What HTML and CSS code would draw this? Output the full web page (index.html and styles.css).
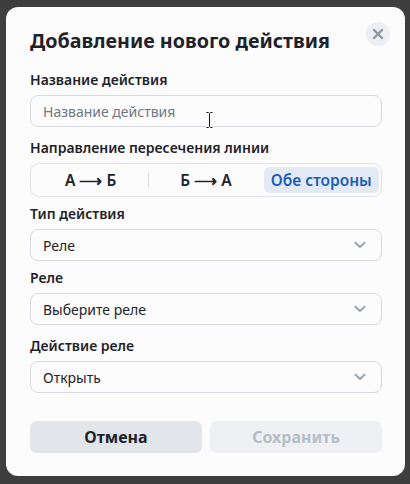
FILE: index.html
```html
<!DOCTYPE html>
<html lang="ru">
<head>
<meta charset="utf-8">
<title>Добавление нового действия</title>
<link rel="stylesheet" href="styles.css">
</head>
<body>
<div class="modal">
  <button class="close" aria-label="Закрыть">
    <svg width="12" height="12" viewBox="0 0 12 12"><path d="M2 2 L10 10 M10 2 L2 10" stroke="#8c96a4" stroke-width="2.4" stroke-linecap="round" fill="none"/></svg>
  </button>
  <h1 class="title">Добавление нового действия</h1>

  <div class="group g1">
    <div class="label">Название действия</div>
    <div class="input"><span class="placeholder">Название действия</span></div>
  </div>

  <div class="group g2">
    <div class="label">Направление пересечения линии</div>
    <div class="segmented">
      <div class="seg">А ⟶ Б</div>
      <div class="seg divider">Б ⟶ А</div>
      <div class="seg active">Обе стороны</div>
    </div>
  </div>

  <div class="group g3">
    <div class="label">Тип действия</div>
    <div class="select"><span>Реле</span><svg class="chev" width="12" height="8" viewBox="0 0 12 8"><path d="M1.5 1.8 L6 6 L10.5 1.8" stroke="#9aa3af" stroke-width="2" stroke-linecap="round" stroke-linejoin="round" fill="none"/></svg></div>
  </div>

  <div class="group g4">
    <div class="label">Реле</div>
    <div class="select"><span>Выберите реле</span><svg class="chev" width="12" height="8" viewBox="0 0 12 8"><path d="M1.5 1.8 L6 6 L10.5 1.8" stroke="#9aa3af" stroke-width="2" stroke-linecap="round" stroke-linejoin="round" fill="none"/></svg></div>
  </div>

  <div class="group g5">
    <div class="label">Действие реле</div>
    <div class="select"><span>Открыть</span><svg class="chev" width="12" height="8" viewBox="0 0 12 8"><path d="M1.5 1.8 L6 6 L10.5 1.8" stroke="#9aa3af" stroke-width="2" stroke-linecap="round" stroke-linejoin="round" fill="none"/></svg></div>
  </div>

  <div class="footer">
    <button class="btn cancel">Отмена</button>
    <button class="btn save">Сохранить</button>
  </div>

  <svg class="cursor" width="9" height="18" viewBox="0 0 9 18"><path d="M1.5 1.5 H3.5 L4.5 2.5 L5.5 1.5 H7.5 M4.5 2.5 V15.5 M1.5 16.5 H3.5 L4.5 15.5 L5.5 16.5 H7.5" stroke="#fff" stroke-width="3" fill="none"/><path d="M1.5 1.5 H3.5 L4.5 2.5 L5.5 1.5 H7.5 M4.5 2.5 V15.5 M1.5 16.5 H3.5 L4.5 15.5 L5.5 16.5 H7.5" stroke="#111" stroke-width="1" fill="none"/></svg>
</div>
</body>
</html>
```

FILE: styles.css
```css
* { box-sizing: border-box; }
html, body { margin: 0; padding: 0; }
body {
  background: #3e3e3e;
  font-family: "Noto Sans", "Open Sans", sans-serif;
  color: #1f2329;
  width: 410px;
  height: 484px;
  overflow: hidden;
}
.modal {
  position: relative;
  margin: 7px 0 0 6px;
  width: 399px;
  padding: 20px 23px 23px 24px;
  background: #fcfcfd;
  border-radius: 12px;
}
.close {
  position: absolute;
  top: 15px;
  right: 15px;
  width: 24px;
  height: 24px;
  border: none;
  border-radius: 50%;
  background: #eceef1;
  padding: 0;
  display: flex;
  align-items: center;
  justify-content: center;
}
.title {
  margin: 0;
  font-size: 19.7px;
  line-height: 28px;
  font-weight: 700;
  color: #1f2329;
}
.group { display: flex; flex-direction: column; }
.g1 { margin-top: 15px; }
.g2 { margin-top: 11px; }
.g3 { margin-top: 7px; }
.g4 { margin-top: 7px; }
.g5 { margin-top: 11px; }
.label {
  font-size: 14px;
  line-height: 20px;
  font-weight: 600;
  color: #1f2329;
  margin-bottom: 5px;
}
.input, .select {
  height: 32px;
  border: 1px solid #d6dae0;
  border-radius: 8px;
  background: #fcfcfd;
  display: flex;
  align-items: center;
  padding: 0 12px;
  font-size: 14px;
}
.placeholder { color: #6f7782; }
.select { justify-content: space-between; color: #1f2329; padding-right: 15px; }
.segmented {
  height: 34px;
  border: 1px solid #dfe2e7;
  border-radius: 9px;
  padding: 2px;
  display: flex;
  align-items: stretch;
}
.seg {
  flex: 1;
  display: flex;
  align-items: center;
  justify-content: center;
  font-size: 15.5px;
  font-weight: 600;
  color: #1f2329;
  position: relative;
  border-radius: 6px;
}
.seg.divider::before {
  content: "";
  position: absolute;
  left: 0;
  top: 7px;
  bottom: 7px;
  width: 1px;
  background: #d8dce2;
}
.seg.active {
  background: #e3eaf5;
  color: #1d5db3;
  margin: 1px 0 1px 0;
}
.footer {
  margin-top: 28px;
  display: flex;
  gap: 8px;
}
.btn {
  flex: 1;
  height: 32px;
  border: none;
  border-radius: 7px;
  font-family: inherit;
  font-size: 16px;
  font-weight: 700;
}
.cancel { background: #e2e5e9; color: #1f2329; }
.save { background: #eef0f3; color: #b5bdc8; }
.cursor {
  position: absolute;
  left: 199px;
  top: 104px;
}
```
